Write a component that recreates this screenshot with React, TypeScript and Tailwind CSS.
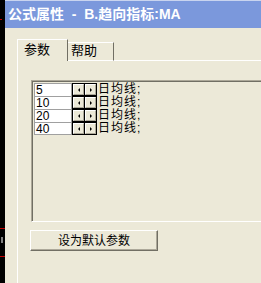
import React from 'react';

const cjk = "font-['Liberation_Sans','Noto_Sans_CJK_SC',sans-serif]";

function Spin() {
  return (
    <div className="w-[25px] h-full bg-black p-[1px] flex gap-[1px] shrink-0">
      <div className="flex-1 bg-[#ece9d8] border-t border-l border-white border-b border-r border-b-[#aca899] border-r-[#aca899] flex items-center justify-center">
        <div className="w-0 h-0 border-y-[2px] border-y-transparent border-r-[2px] border-r-black" />
      </div>
      <div className="flex-1 bg-[#ece9d8] border-t border-l border-white border-b border-r border-b-[#aca899] border-r-[#aca899] flex items-center justify-center">
        <div className="w-0 h-0 border-y-[2px] border-y-transparent border-l-[2px] border-l-black" />
      </div>
    </div>
  );
}

export default function App() {
  const rows = ['5', '10', '20', '40'];
  return (
    <div className={`w-[261px] h-[283px] flex overflow-hidden bg-[#ece9d8] ${cjk}`}>
      {/* chart behind the dialog */}
      <div className="w-[5px] h-full bg-black flex flex-col shrink-0">
        <div className="h-[19px]" />
        <div className="h-[1px] w-[2px] bg-[#c00000]" />
        <div className="h-[208px]" />
        <div className="h-[1px] w-full bg-[#c00000]" />
        <div className="h-[8px]" />
        <div className="h-[6px] w-[2px] ml-[1px] bg-[#808080]" />
        <div className="h-[13px]" />
        <div className="h-[1px] w-full bg-[#c00000]" />
      </div>

      <div className="flex-1 flex flex-col min-w-0">
        {/* TITLE BAR */}
        <div className="h-[28px] shrink-0 bg-[#7b98dc] border-t border-[#c9d4ef] flex items-center pl-[3px] text-white font-bold text-[14px] whitespace-pre">
          公式属性  -  B.趋向指标:MA
        </div>

        <div className="flex-1 flex flex-col pl-[12px] pt-[11px]">
          {/* TABS */}
          <div className="h-[22px] flex items-end shrink-0">
            <div className="w-[51px] h-full border-t border-l border-white border-r border-r-[#716f64] pl-[6px] pt-[2px] text-[13px] leading-[15px] text-black">
              参数
            </div>
            <div className="w-[46px] h-[19px] border-t border-b border-white border-r border-r-[#716f64] pl-[3px] text-[13px] leading-[15px] text-black">
              帮助
            </div>
            <div className="flex-1 h-full border-b border-white" />
          </div>

          {/* PANEL */}
          <div className="flex-1 border-l border-white flex flex-col items-start pl-[13px] pt-[19px]">
            <div className="w-[240px] h-[142px] shrink-0 border-t border-l border-[#aca899] border-b border-b-white">
              <div className="h-full border-t border-l border-[#716f64] pt-[1px] pl-[1px]">
                {rows.map((v, i) => (
                  <div key={v} className="h-[13px] flex items-stretch">
                    <div className={`w-[38px] bg-white border-x border-t border-[#a0a0a0] ${i === 3 ? 'border-b' : ''} pl-[1px] text-[12px] leading-[12px] text-black font-['Liberation_Sans',sans-serif]`}>
                      {v}
                    </div>
                    <Spin />
                    <div className="pl-[1px] text-[12px] leading-[13px] tracking-[1px] text-black">日均线;</div>
                  </div>
                ))}
              </div>
            </div>

            <button className="mt-[8px] -ml-[1px] w-[128px] h-[21px] bg-[#ece9d8] border-t border-l border-white border-b border-r border-b-[#716f64] border-r-[#716f64] shadow-[inset_-1px_-1px_0_#aca899] text-[12px] text-black flex items-center justify-center">
              设为默认参数
            </button>
          </div>
        </div>
      </div>
    </div>
  );
}
